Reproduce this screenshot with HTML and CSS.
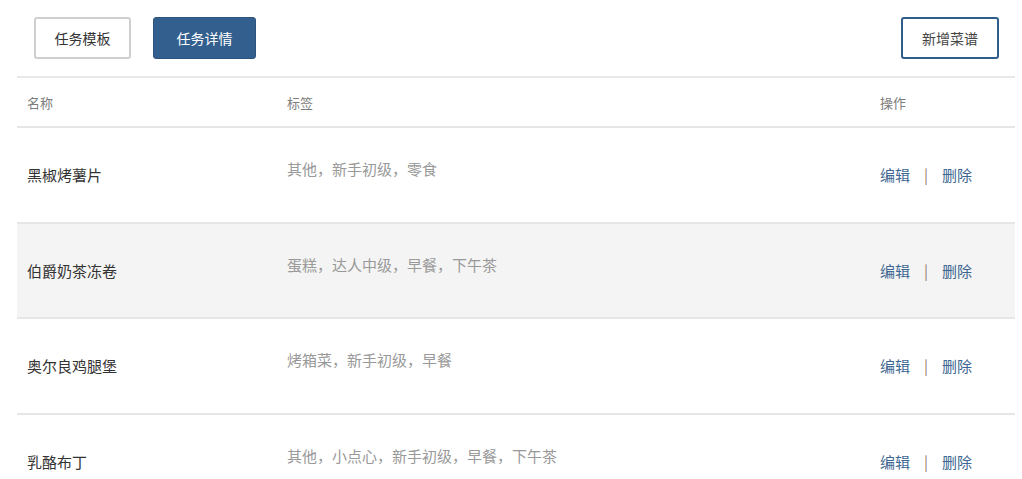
FILE: index.html
```html
<!DOCTYPE html>
<html lang="zh">
<head>
<meta charset="utf-8">
<link rel="stylesheet" href="styles.css">
</head>
<body>
<div class="page">
  <div class="toolbar">
    <div class="tabs">
      <button class="btn btn-plain">任务模板</button>
      <button class="btn btn-primary">任务详情</button>
    </div>
    <button class="btn btn-outline">新增菜谱</button>
  </div>
  <div class="table">
    <div class="row head">
      <div class="cell">名称</div>
      <div class="cell">标签</div>
      <div class="cell">操作</div>
    </div>
    <div class="row">
      <div class="cell name">黑椒烤薯片</div>
      <div class="cell tags">其他，新手初级，零食</div>
      <div class="cell ops"><a>编辑</a><span class="sep">|</span><a>删除</a></div>
    </div>
    <div class="row alt">
      <div class="cell name">伯爵奶茶冻卷</div>
      <div class="cell tags">蛋糕，达人中级，早餐，下午茶</div>
      <div class="cell ops"><a>编辑</a><span class="sep">|</span><a>删除</a></div>
    </div>
    <div class="row">
      <div class="cell name">奥尔良鸡腿堡</div>
      <div class="cell tags">烤箱菜，新手初级，早餐</div>
      <div class="cell ops"><a>编辑</a><span class="sep">|</span><a>删除</a></div>
    </div>
    <div class="row">
      <div class="cell name">乳酪布丁</div>
      <div class="cell tags">其他，小点心，新手初级，早餐，下午茶</div>
      <div class="cell ops"><a>编辑</a><span class="sep">|</span><a>删除</a></div>
    </div>
  </div>
</div>
</body>
</html>
```
FILE: styles.css
```css
* { box-sizing: border-box; }
html, body { margin: 0; padding: 0; background: #fff; }
body {
  font-family: "Noto Sans CJK SC", "Noto Sans", sans-serif;
  color: #333;
  overflow: hidden;
  height: 479px;
}
.page {
  padding: 17px 7px 0 17px;
}
.toolbar {
  display: flex;
  justify-content: space-between;
  align-items: center;
  padding: 0 16px 0 17px;
  margin-bottom: 17px;
}
.tabs { display: flex; gap: 22px; }
.btn {
  height: 42px;
  font-family: inherit;
  font-size: 14px;
  border-radius: 3px;
  padding: 0;
  cursor: pointer;
  line-height: 1;
}
.btn-plain {
  width: 97px;
  background: #fff;
  border: 2px solid #cfcfcf;
  color: #333;
}
.btn-primary {
  width: 103px;
  background: #335f8e;
  border: 1px solid #2d5580;
  color: #fff;
}
.btn-outline {
  width: 98px;
  background: #fff;
  border: 2px solid #2f5d8c;
  color: #444;
}
.table {
  border-top: 2px solid #e8e8e8;
}
.row {
  display: grid;
  grid-template-columns: 260px 593px 1fr;
  height: 95.5px;
  border-bottom: 2px solid #e6e6e6;
  align-items: center;
}
.row.head {
  height: 50px;
}
.row.alt { background: #f4f4f4; }
.cell {
  padding-left: 10px;
  font-size: 15px;
}
.head .cell {
  font-size: 13px;
  color: #7d7d7d;
}
.name { color: #333; }
.tags {
  color: #999;
  padding-bottom: 12px;
}
.ops a {
  color: #3d6792;
  cursor: pointer;
}
.sep {
  color: #9a8066;
  margin: 0 14px 0 14px;
}
```
